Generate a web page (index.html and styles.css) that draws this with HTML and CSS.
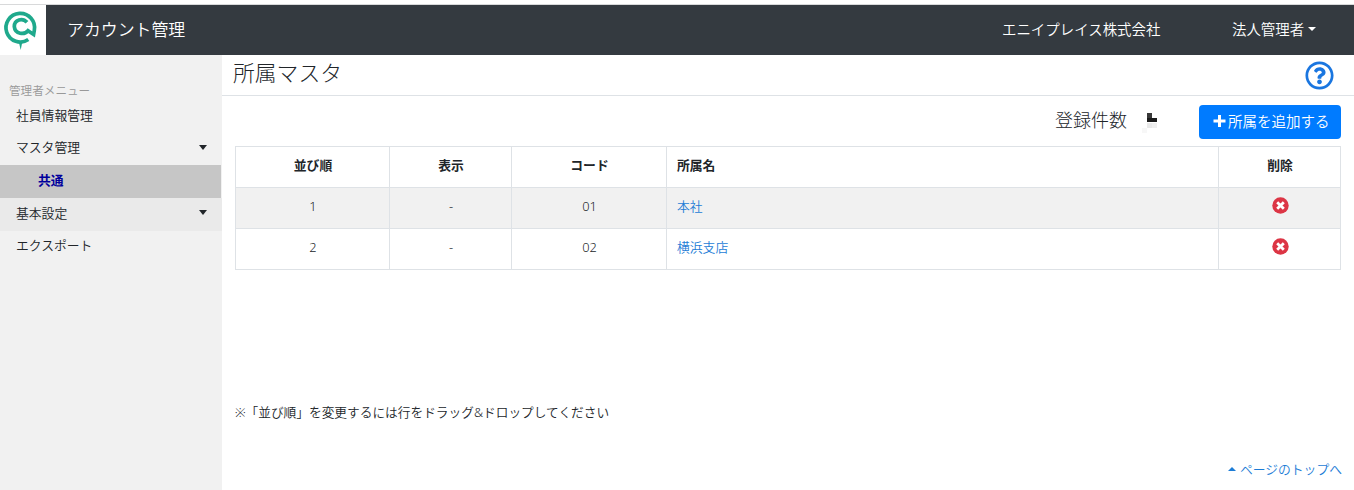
FILE: index.html
```
<!DOCTYPE html>
<html lang="ja">
<head>
<meta charset="UTF-8" />
<meta name="viewport" content="width=device-width, initial-scale=1" />
<title>所属マスタ - アカウント管理</title>
<link rel="stylesheet" href="styles.css">
</head>
<body>
  <header class="navbar">
    <a class="logo" href="#">
      <svg width="46" height="51" viewBox="0 0 46 51" fill="none" stroke="#1fa98c">
        <path d="M28.3 34.500 A14.300 14.300 0 1 1 34.300 25.500 L33.600 29.500 L28 25.800 C24.500 30 15 29.500 14.300 21.500 C14.300 14.500 22.500 12.300 27 17.300" stroke-width="3.700" />
        <path d="M17.700 36 h6 l-1.800 3 l-1.200 6 l-1.400-6 z" fill="#1fa98c" stroke="none" />
      </svg>
    </a>
    <span class="brand">アカウント管理</span>
    <span class="company">エニイプレイス株式会社</span>
    <a class="user" href="#">法人管理者<i class="caret"></i></a>
  </header>

  <div class="wrapper">
    <nav class="sidebar">
      <div class="menu-title">管理者メニュー</div>
      <a class="menu-item" href="#">社員情報管理</a>
      <a class="menu-item" href="#">マスタ管理<i class="caret"></i></a>
      <a class="menu-item sub active" href="#">共通</a>
      <a class="menu-item hover" href="#">基本設定<i class="caret"></i></a>
      <a class="menu-item" href="#">エクスポート</a>
    </nav>

    <main class="content">
      <div class="page-head">
        <h1>所属マスタ</h1>
        <a class="help" href="#" aria-label="ヘルプ">
          <svg width="29" height="29" viewBox="0 0 512 512" fill="#1a76e0">
            <path d="M256 8C119 8 8 119 8 256s111 248 248 248 248-111 248-248S393 8 256 8zm0 448c-110.500 0-200-89.400-200-200 0-110.500 89.500-200 200-200 110.500 0 200 89.500 200 200 0 110.500-89.400 200-200 200zm107.200-255.200c0 67.100-72.400 68.100-72.400 92.900V300c0 6.600-5.400 12-12 12h-45.600c-6.600 0-12-5.400-12-12v-8.700c0-35.700 27.100-50 47.600-61.500 17.600-9.800 28.300-16.500 28.300-29.600 0-17.200-22-28.700-39.800-28.700-23.200 0-33.900 11-49 30-4.100 5.100-11.500 6.100-16.700 2.100l-27.800-21.100c-5.100-3.900-6.300-11.100-2.600-16.400C184.800 131.500 214.900 112 261.800 112c49.100 0 101.400 38.300 101.400 88.800zM298 368c0 23.200-18.800 42-42 42s-42-18.800-42-42 18.800-42 42-42 42 18.800 42 42z" />
          </svg>
        </a>
      </div>

      <div class="toolbar">
        <span class="count-label">登録件数</span>
        <svg class="count-value" width="30" height="25" viewBox="0 0 30 25" shape-rendering="crispEdges">
          <path d="M0 15h5v5H0z M10 10h5v5h-5z" fill="#f7f7f7" />
          <path d="M5 10h5v5H5z" fill="#e9e9e9" />
          <path d="M10 10h5v5h-5z" fill="#efefef" />
          <path d="M5 0h5v5H5z" fill="#383838" />
          <path d="M5 5h10v4H5z" fill="#1c1c1c" />
        </svg>
        <button type="button" class="btn-add">
          <svg width="13" height="14" viewBox="0 0 13 14"><path d="M5 1h3v4.500h4.500v3H8V13H5V8.500H.5v-3H5z" fill="#fff" /></svg>
          所属を追加する
        </button>
      </div>

      <table class="list">
        <colgroup>
          <col class="col-order"><col class="col-show"><col class="col-code"><col><col class="col-delete">
        </colgroup>
        <thead>
          <tr><th>並び順</th><th>表示</th><th>コード</th><th class="name">所属名</th><th>削除</th></tr>
        </thead>
        <tbody>
          <tr>
            <td>1</td><td>-</td><td>01</td><td class="name"><a href="#">本社</a></td>
            <td><svg class="delete" width="17" height="17" viewBox="0 0 17 17"><circle cx="8.500" cy="8.500" r="8.200" fill="#dc3545" /><path d="M5.200 5.200l6.600 6.600M11.800 5.200l-6.600 6.600" stroke="#fff" stroke-width="2.800" /></svg></td>
          </tr>
          <tr>
            <td>2</td><td>-</td><td>02</td><td class="name"><a href="#">横浜支店</a></td>
            <td><svg class="delete" width="17" height="17" viewBox="0 0 17 17"><circle cx="8.500" cy="8.500" r="8.200" fill="#dc3545" /><path d="M5.200 5.200l6.600 6.600M11.800 5.200l-6.600 6.600" stroke="#fff" stroke-width="2.800" /></svg></td>
          </tr>
        </tbody>
      </table>

      <p class="note">※「並び順」を変更するには行をドラッグ&amp;ドロップしてください</p>

      <a class="page-top" href="#"><i class="caret-up"></i>ページのトップへ</a>
    </main>
  </div>
</body>
</html>
```
FILE: styles.css
```
* {
  box-sizing: border-box;
}

body {
  margin: 0;
  padding-top: 4px;
  height: 490px;
  overflow: hidden;
  font-family: "Noto Sans", "Noto Sans CJK JP", sans-serif;
  font-size: 12.8px;
  font-weight: 350;
  line-height: 20px;
  color: #212529;
  background: #fff;
}

a {
  color: #1c7cd6;
  text-decoration: none;
}

.navbar {
  display: flex;
  align-items: center;
  height: 51px;
  border-top: 1px solid #d8d9da;
  background: #343a40;
  color: #fff;
}

.logo {
  width: 46px;
  height: 51px;
  background: #fff;
}

.brand {
  flex: 1;
  padding-left: 21px;
  font-size: 16.9px;
}

.company {
  width: 230px;
  font-size: 14.45px;
}

.user {
  width: 122px;
  font-size: 14.45px;
  color: #fff;
}

.caret {
  display: inline-block;
  border: 4px solid transparent;
  border-top-color: currentColor;
  border-bottom: 0;
  margin-left: 4px;
  vertical-align: 4px;
}

.wrapper {
  display: flex;
  height: 435px;
}

.sidebar {
  width: 222px;
  padding-top: 26px;
  background: #f1f1f1;
}

.menu-title {
  height: 19px;
  padding-left: 9px;
  font-size: 11.6px;
  color: #999;
}

.menu-item {
  display: flex;
  align-items: center;
  justify-content: space-between;
  width: 221px;
  height: 32.5px;
  padding: 0 14px 3px 16px;
  color: #212529;
}

.menu-item .caret {
  border-width: 5px 4.5px 0;
}

.menu-item.active {
  height: 33px;
  padding-left: 38px;
  background: #c6c6c6;
  color: #00009c;
  font-weight: bold;
}

.menu-item.hover {
  width: 222px;
  padding-right: 15px;
  background: #eaeaea;
}

.content {
  flex: 1;
  display: flex;
  flex-direction: column;
}

.page-head {
  display: flex;
  justify-content: space-between;
  height: 41px;
  padding: 6px 20px 0 11px;
  border-bottom: 1px solid #dee2e6;
}

.page-head h1 {
  margin: 0;
  font-size: 21.8px;
  font-weight: 300;
  line-height: 24px;
}

.toolbar {
  display: flex;
  justify-content: flex-end;
  align-items: flex-start;
  height: 50px;
  padding: 9px 13px 0 0;
}

.count-label {
  font-size: 18px;
  font-weight: 300;
  line-height: 30px;
}

.count-value {
  margin: 8px 27px 0 15px;
}

.btn-add {
  display: flex;
  align-items: center;
  gap: 2px;
  width: 142px;
  height: 34px;
  padding: 0 0 3px 14px;
  border: 0;
  border-radius: 4px;
  background: #007bff;
  color: #fff;
  font-family: inherit;
  font-size: 14.5px;
  font-weight: inherit;
  white-space: nowrap;
}

.list {
  width: 1106px;
  margin-left: 13px;
  border-collapse: collapse;
  table-layout: fixed;
}

.col-order { width: 154px; }
.col-show { width: 122px; }
.col-code { width: 155px; }
.col-delete { width: 122px; }

.list th,
.list td {
  height: 41px;
  padding: 0 10px 5px 11px;
  border: 1px solid #dee2e6;
  text-align: center;
  vertical-align: middle;
}

.list .name {
  padding-left: 10px;
  text-align: left;
}

.list tbody tr:nth-child(odd) {
  background: #f1f1f1;
}

.delete {
  display: block;
  margin: 0 auto;
}

.note {
  margin: 132px 0 0 13px;
  font-size: 12.7px;
}

.page-top {
  display: flex;
  align-items: center;
  align-self: flex-end;
  margin: 37px 12px 0 0;
}

.caret-up {
  margin-right: 4px;
  border: 4px solid transparent;
  border-bottom-color: currentColor;
  border-top: 0;
}
```
